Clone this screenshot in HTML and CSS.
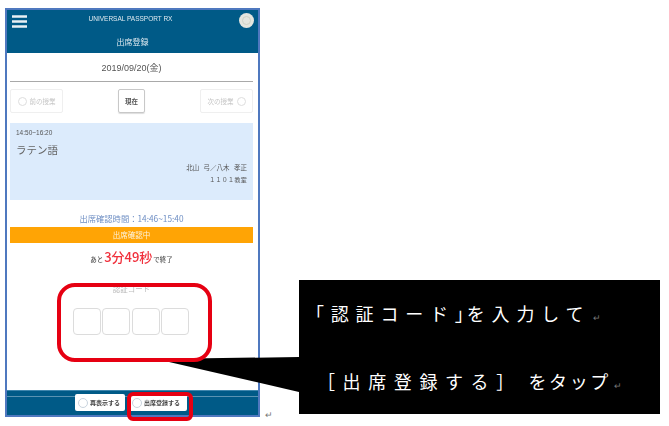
FILE: index.html
```html
<!DOCTYPE html>
<html lang="ja">
<head>
<meta charset="utf-8">
<title>出席登録</title>
<link rel="stylesheet" href="styles.css">
</head>
<body>
<div class="canvas">
  <div class="phone">
    <header class="head">
      <div class="head-top">
        <svg class="menu" width="16" height="13" viewBox="0 0 16 13"><path d="M0 1.5h15M0 6.5h15M0 11.5h15" stroke="#e8f0f4" stroke-width="2.4" fill="none"/></svg>
        <span class="app">UNIVERSAL PASSPORT RX</span>
        <span class="avatar"><span class="avatar-in"></span></span>
      </div>
      <div class="head-title">出席登録</div>
    </header>
    <main class="main">
      <div class="date">2019/09/20(金)</div>
      <div class="nav">
        <div class="nav-btn ghost"><span class="dot"></span>前の授業</div>
        <div class="nav-btn now">現在</div>
        <div class="nav-btn ghost">次の授業<span class="dot"></span></div>
      </div>
      <section class="card">
        <div class="time">14:50~16:20</div>
        <div class="subject">ラテン語</div>
        <div class="teacher">北山&nbsp;&nbsp; 弓／八木&nbsp;&nbsp; 孝正</div>
        <div class="room">１１０１教室</div>
      </section>
      <div class="period">出席確認時間：14:46~15:40</div>
      <div class="status">出席確認中</div>
      <div class="remain">あと<strong>3分49秒</strong>で終了</div>
      <div class="code-label">認証コード</div>
      <div class="codes"><span class="code"></span><span class="code"></span><span class="code"></span><span class="code"></span></div>
    </main>
    <footer class="foot">
      <div class="foot-btn"><span class="dot small"></span>再表示する</div>
      <div class="foot-btn wide"><span class="dot small"></span>出席登録する</div>
    </footer>
  </div>
  <span class="ret ret-doc">↵</span>

  <svg class="pointer" width="150" height="40" viewBox="0 0 150 40"><polygon points="0,3 143,1 143,36" fill="#000"/></svg>
  <div class="ring ring-code"></div>
  <div class="ring ring-btn"></div>

  <div class="callout">
    <p class="line one">「認証コード<span class="tight">」</span>を入力して<span class="ret-in">↵</span></p>
    <p class="line two"><span class="wide-run">［出席登録する］</span> をタップ<span class="ret-in">↵</span></p>
  </div>
</div>
</body>
</html>
```
FILE: styles.css
```css
* { box-sizing: border-box; }
html, body { margin: 0; padding: 0; background: #fff; }
body { font-family: "Noto Sans CJK JP", "Noto Sans", sans-serif; width: 669px; height: 426px; overflow: hidden; }
.canvas { position: relative; width: 669px; height: 426px; padding: 8px 0 0 5px; }

.phone {
  width: 255px; height: 409px;
  border: 2px solid #4f78bf;
  display: flex; flex-direction: column;
  background: #fff;
  filter: blur(0.6px);
}
.head { background: #005a87; height: 43px; color: #dfeaf0; flex: none; }
.head-top { height: 21px; display: flex; align-items: center; padding: 0 0 0 5px; position: relative; }
.menu { flex: none; margin-top: 2px; }
.app { flex: 1; text-align: center; font: 6.5px "Liberation Sans", sans-serif; padding-right: 6px; margin-top: -5px; }
.avatar { width: 15px; height: 15px; border-radius: 50%; background: #e4e6df; margin-right: 4px; margin-top: -1px; display: flex; align-items: center; justify-content: center; flex: none; }
.avatar-in { width: 9px; height: 9px; border-radius: 50%; border: 1px solid #cfd3c6; }
.head-title { text-align: center; font-size: 8px; line-height: 12px; padding-top: 5px; }

.main { flex: 1; padding: 0 5px 0 3px; display: flex; flex-direction: column; color: #444; }
.date { text-align: center; line-height: 12px; padding-top: 9px; height: 29px; border-bottom: 1.5px solid #a9a9a9; color: #555; font-family: "Liberation Sans", "Noto Sans CJK JP", sans-serif; font-size: 9px; }
.nav { display: flex; justify-content: space-between; margin-top: 7px; height: 24px; align-items: stretch; }
.nav-btn { border-radius: 2px; font-size: 6.5px; display: flex; align-items: center; justify-content: center; gap: 3px; }
.ghost { width: 53px; border: 1px solid #efefef; color: #c4c4c4; }
.now { width: 27px; border: 1px solid #c8c8c8; font-weight: 700; color: #555; box-shadow: 0 1px 1px #ddd; }
.dot { width: 9px; height: 9px; border: 1px solid #dedede; border-radius: 50%; flex: none; }
.card { background: #dcebfc; height: 77px; margin-top: 10px; padding: 5px 6px; position: relative; color: #555; }
.time { font: 6.5px/10px "Liberation Sans", sans-serif; }
.subject { font-size: 10.5px; line-height: 14px; margin-top: 5px; color: #666; }
.teacher { text-align: right; font-size: 6.5px; line-height: 12px; margin-top: 4px; }
.room { text-align: right; font-size: 6px; line-height: 12px; margin-top: 1px; letter-spacing: 0.3px; }
.period { text-align: center; font-size: 8.3px; line-height: 10px; margin-top: 13px; color: #6f8fc4; }
.status { background: #ffa405; color: #fdf3dd; text-align: center; font-size: 7.5px; line-height: 16px; height: 16px; margin-top: 4px; }
.remain { text-align: center; font-size: 6.5px; line-height: 18px; margin-top: 5px; color: #555; font-weight: 500; }
.remain strong { color: #f0303c; font-size: 13px; font-weight: 500; padding: 0 1px; }
.code-label { text-align: center; font-size: 7.5px; line-height: 10px; margin-top: 16px; color: #bbb; }
.codes { display: flex; justify-content: center; gap: 1.5px; margin-top: 14px; padding-right: 1px; }
.code { width: 28px; height: 27px; border: 1.5px solid #dcdcdc; border-radius: 4px; display: block; }

.foot { height: 25px; flex: none; background: #005a87; border-top: 1px solid #3f86ad; display: flex; justify-content: center; gap: 4px; padding-top: 3px; padding-right: 3px; position: relative; }
.foot::before { content: ""; position: absolute; left: 0; right: 0; top: 5px; height: 1px; background: #5a93b2; }
.foot-btn { position: relative; width: 50px; height: 17px; background: #fff; border-radius: 2px; font-size: 6px; font-weight: 700; color: #444; display: flex; align-items: center; gap: 2px; padding-left: 3px; white-space: nowrap; }
.foot-btn.wide { width: 58px; }
.dot.small { width: 10px; height: 10px; border-color: #c9d4de; border-width: 1.5px; }

.ret { position: absolute; color: #777; font: 9px "Liberation Sans", sans-serif; }
.ret-doc { left: 265px; top: 410px; }

.pointer { position: absolute; left: 156px; top: 356px; }
.ring { position: absolute; border: 4px solid #e60012; }
.ring-code { left: 57px; top: 283px; width: 155px; height: 79px; border-radius: 18px; }
.ring-btn { left: 127px; top: 392px; width: 66px; height: 29px; border-radius: 6px; }

.callout { position: absolute; left: 299px; top: 280px; width: 361px; height: 134px; background: #000; color: #fff; }
.line { position: absolute; margin: 0; white-space: nowrap; font-size: 18px; line-height: 24px; font-weight: 400; }
.one { left: 7px; top: 21px; letter-spacing: 6.8px; }
.tight { letter-spacing: -6px; }
.two { left: 18px; top: 89px; letter-spacing: 2.6px; }
.wide-run { letter-spacing: 7.6px; }
.ret-in { color: #777; font: 9px "Liberation Sans", sans-serif; letter-spacing: 0; margin-left: 3px; }
```
